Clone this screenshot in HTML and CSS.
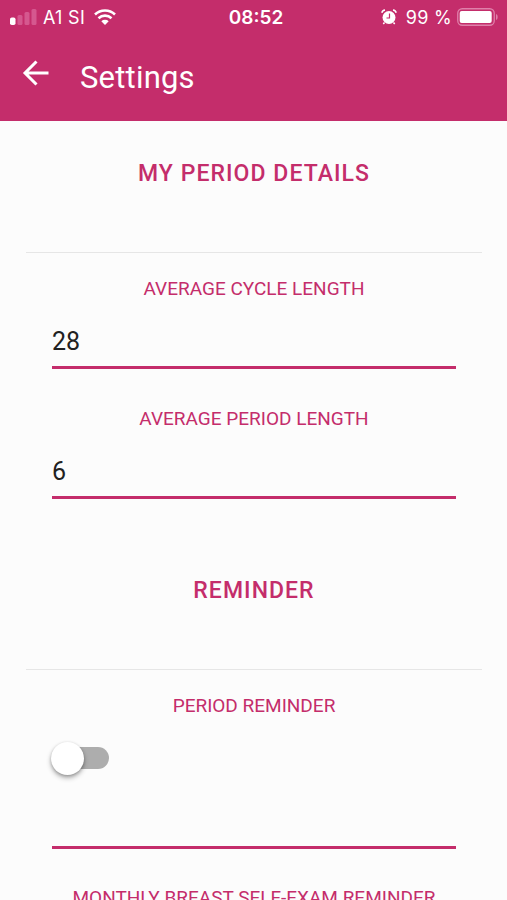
FILE: index.html
```
<!DOCTYPE html>
<html lang="en">
<head>
  <meta charset="UTF-8">
  <title>Settings</title>
  <link rel="stylesheet" href="styles.css">
</head>
<body>
  <header class="header">
    <div class="status-bar">
      <div class="status-left">
        <svg class="signal" width="27" height="16" viewBox="0 0 27 16">
          <rect x="0" y="8.500" width="5.500" height="7.500" rx="1.8" fill="#fff"/>
          <rect x="7.500" y="6" width="5" height="10" rx="1.5" fill="#d5588f"/>
          <rect x="14.500" y="3" width="5" height="13" rx="1.5" fill="#d5588f"/>
          <rect x="21.500" y="0" width="5" height="16" rx="1.5" fill="#d5588f"/>
        </svg>
        <span class="carrier">A1 SI</span>
        <svg class="wifi" width="22" height="16" viewBox="0 0 22 16">
          <path d="M1 5.500a14.500 14.500 0 0 1 20 0M4.500 9.200a9.500 9.500 0 0 1 13 0" fill="none" stroke="#fff" stroke-width="2.6"/>
          <path d="M7.300 12.200a5.500 5.500 0 0 1 7.400 0L11 16z" fill="#fff"/>
        </svg>
      </div>
      <div class="clock">08:52</div>
      <div class="status-right">
        <svg class="alarm" width="16" height="16" viewBox="0 0 16 16">
          <circle cx="8" cy="8.500" r="6.500" fill="#fff"/>
          <path d="M.8 3.800C1.200 2.200 2.400 1.200 4 1M15.200 3.800C14.800 2.200 13.600 1.200 12 1M3.500 13.500L2.300 15M12.500 13.500l1.200 1.500" fill="none" stroke="#fff" stroke-width="1.500"/>
          <path d="M8.500 4.500V9H5.500" fill="none" stroke="#c42d6b" stroke-width="1.200"/>
        </svg>
        <span class="percent">99 %</span>
        <svg class="battery" width="42" height="18" viewBox="0 0 42 18">
          <rect x=".75" y=".75" width="36.500" height="16.500" rx="4.500" fill="none" stroke="#df80aa" stroke-width="1.300"/>
          <rect x="2.700" y="3" width="32" height="12" rx="2" fill="#fff"/>
          <path d="M39 6c2.200 .5 2.200 5.500 0 6z" fill="#df80aa"/>
        </svg>
      </div>
    </div>
    <div class="toolbar">
      <svg class="back" width="27" height="28" viewBox="0 0 27 28">
        <path d="M26.500 14H3.500M14.500 2.500L3 14l11.500 11.500" fill="none" stroke="#fff" stroke-width="3"/>
      </svg>
      <h1 class="title">Settings</h1>
    </div>
  </header>

  <main class="content">
    <section class="section">
      <h2 class="section-title">MY PERIOD DETAILS</h2>
      <div class="field">
        <div class="label">AVERAGE CYCLE LENGTH</div>
        <div class="value">28</div>
      </div>
      <div class="field">
        <div class="label">AVERAGE PERIOD LENGTH</div>
        <div class="value">6</div>
      </div>
    </section>

    <section class="section">
      <h2 class="section-title">REMINDER</h2>
      <div class="field field-switch">
        <div class="label">PERIOD REMINDER</div>
        <div class="value"><span class="switch"><span class="knob"></span></span></div>
      </div>
      <div class="field field-last">
        <div class="label">MONTHLY BREAST SELF-EXAM REMINDER</div>
      </div>
    </section>
  </main>
</body>
</html>
```

FILE: styles.css
```
html, body {
  height: 100%;
}

body {
  display: flex;
  flex-direction: column;
  margin: 0;
  overflow: hidden;
  background: #fcfcfc;
  color: #212121;
  font-family: Roboto, sans-serif;
}

.header {
  flex: none;
  height: 121px;
  background: #c42d6b;
  color: #fff;
}

.content {
  flex: 1;
  min-height: 0;
  overflow: hidden;
}

.status-bar {
  display: grid;
  grid-template-columns: 1fr auto 1fr;
  align-items: center;
  height: 34px;
  padding: 0 8px 0 10px;
  font-family: Inter, sans-serif;
  font-size: 18px;
}

.status-left,
.status-right {
  display: flex;
  align-items: center;
}

.status-right {
  justify-content: flex-end;
}

.carrier {
  margin: 0 9px 0 6px;
  letter-spacing: 0.3px;
}

.clock {
  padding-left: 3px;
  font-weight: 600;
  font-size: 19px;
}

.percent {
  margin: 0 5px 0 9px;
  letter-spacing: 0.3px;
}

.toolbar {
  display: flex;
  align-items: center;
  height: 78px;
  padding-left: 22px;
}

.title {
  margin: 9px 0 0 31px;
  font-size: 31px;
  font-weight: 400;
  letter-spacing: 0.2px;
}

.section {
  padding: 0 25px 0 26px;
}

.section-title {
  box-sizing: border-box;
  height: 132px;
  margin: 0;
  padding-top: 39px;
  border-bottom: 1px solid #e6e6e6;
  color: #c42d6b;
  font-size: 23px;
  font-weight: 500;
  line-height: 28px;
  letter-spacing: 1.05px;
  text-align: center;
}

.section + .section .section-title {
  height: 157px;
  padding-top: 64px;
}

.field {
  box-sizing: border-box;
  height: 130px;
  padding: 24px 26px 0;
}

.label {
  color: #c42d6b;
  font-size: 19px;
  line-height: 24px;
  text-align: center;
  white-space: nowrap;
}

.value {
  box-sizing: border-box;
  height: 68px;
  padding-top: 25px;
  border-bottom: 3px solid #c42d6b;
  font-size: 25px;
  line-height: 32px;
}

.field-switch {
  height: 192px;
}

.field-switch .value {
  height: 131px;
  padding-top: 29px;
}

.field-last {
  height: 38px;
}

.switch {
  display: flex;
  align-items: center;
  box-sizing: border-box;
  width: 53px;
  height: 22px;
  margin-left: 4px;
  border-radius: 11px;
  background: #adadad;
}

.knob {
  flex: none;
  width: 33px;
  height: 33px;
  margin-left: -5px;
  border-radius: 50%;
  background: #fff;
  box-shadow: 0 3px 5px rgba(0, 0, 0, 0.3), 0 1px 3px rgba(0, 0, 0, 0.2);
}
```
